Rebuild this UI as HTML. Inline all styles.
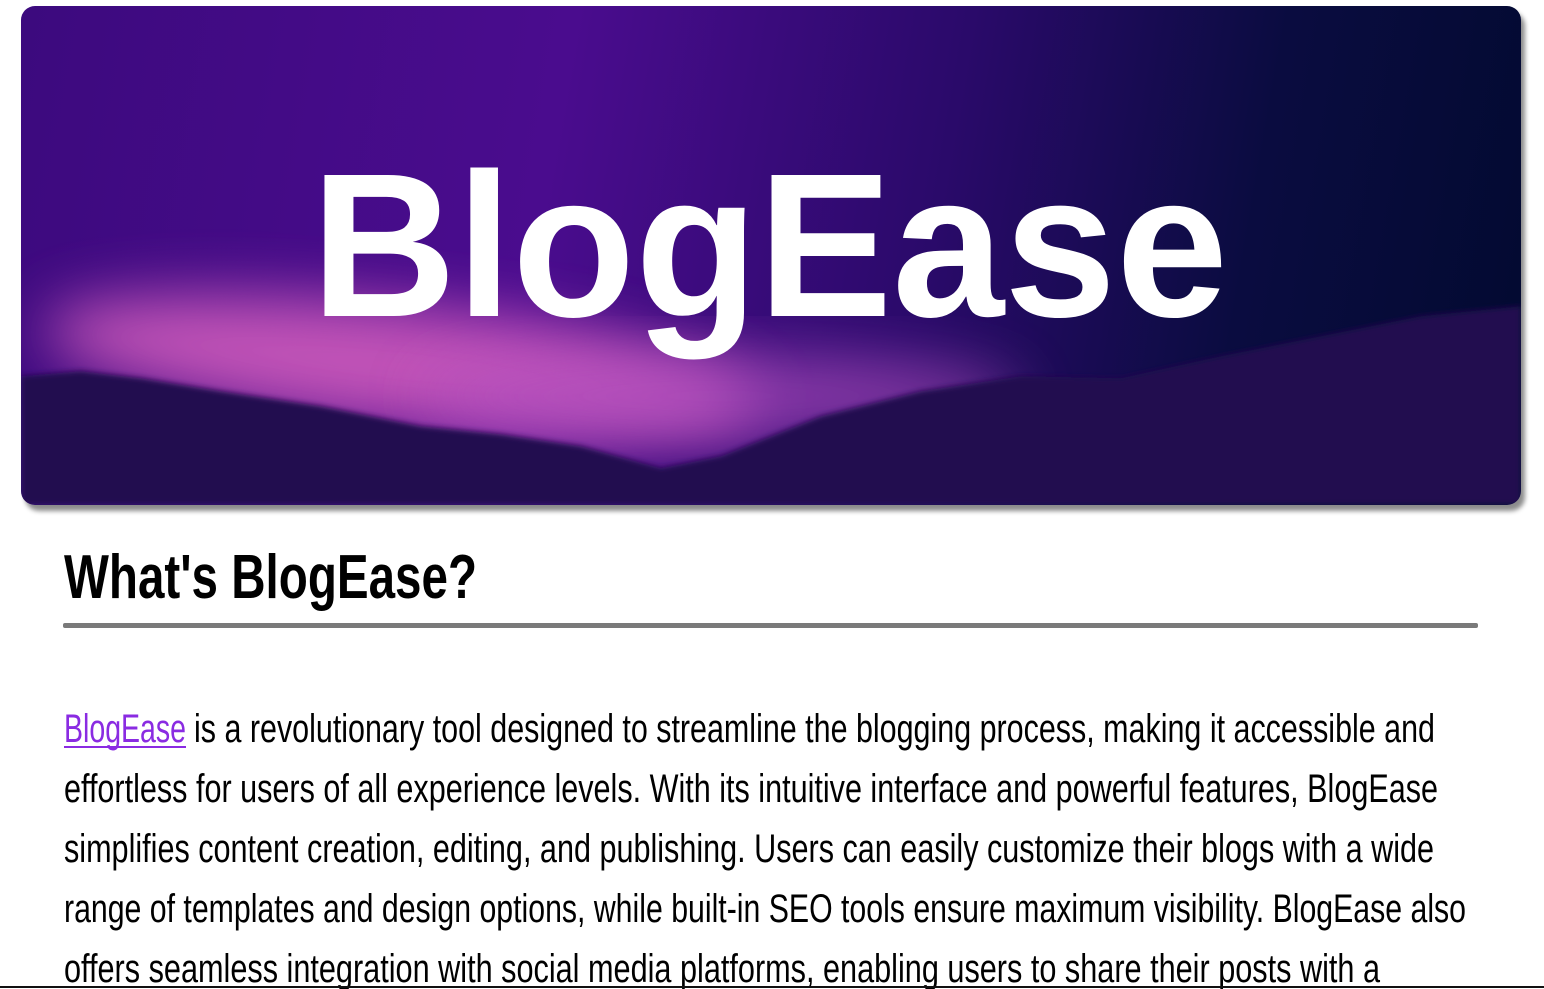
<!DOCTYPE html>
<html><head><meta charset="utf-8"><style>
html,body{margin:0;padding:0;background:#fff;width:1544px;height:989px;overflow:hidden;position:relative}
.banner{position:absolute;left:21px;top:6px;width:1500px;height:499px;border-radius:14px;overflow:hidden;box-shadow:4px 6px 5px rgba(0,0,0,.45);
background:linear-gradient(100deg,#3c0a7e 0%,#4a0c8e 35%,#2a0a6a 60%,#0a0c40 80%,#020a30 100%)}
.bl{position:absolute;left:0;top:0}
.bottomline{position:absolute;left:0;top:986px;width:1544px;height:2px;background:#111}
</style></head><body>
<div class="banner">
<svg class="bl" width="1500" height="499" viewBox="0 0 1500 499">
<defs>
<filter id="b" x="-30%" y="-50%" width="160%" height="200%"><feGaussianBlur stdDeviation="30"/></filter>
<filter id="b2"><feGaussianBlur stdDeviation="3"/></filter>
</defs>
<ellipse cx="380" cy="360" rx="360" ry="60" fill="#d860c0" opacity=".85" filter="url(#b)" transform="rotate(6 380 360)"/>
<ellipse cx="700" cy="390" rx="300" ry="40" fill="#b050c0" opacity=".7" filter="url(#b)"/>
<path d="M0 370 L60 365 L120 372 L200 385 L300 400 L400 420 L480 428 L560 440 L640 462 L700 450 L800 410 L900 385 L1000 370 L1100 372 L1200 350 L1300 330 L1400 310 L1500 300 L1500 499 L0 499 Z" fill="#22074f" filter="url(#b2)"/>
<text x="290" y="310" font-family="Liberation Sans, sans-serif" font-weight="bold" font-size="205" fill="#fff" textLength="917" lengthAdjust="spacingAndGlyphs">BlogEase</text>
</svg>
</div>
<svg style="position:absolute;left:0;top:520px" width="1544" height="470">
<text x="64" y="78" font-family="Liberation Sans, sans-serif" font-weight="bold" font-size="62" fill="#000" textLength="413" lengthAdjust="spacingAndGlyphs">What's BlogEase?</text>
<rect x="63" y="103" width="1415" height="5" rx="2" fill="#7a7a7a"/>
<g font-family="Liberation Sans, sans-serif" font-size="40" fill="#000">
<text x="64" y="222" textLength="122" lengthAdjust="spacingAndGlyphs" fill="#8a2be2">BlogEase</text>
<rect x="64" y="226" width="122" height="2" fill="#8a2be2"/>
<text x="194" y="222" textLength="1241" lengthAdjust="spacingAndGlyphs">is a revolutionary tool designed to streamline the blogging process, making it accessible and</text>
<text x="64" y="282" textLength="1374" lengthAdjust="spacingAndGlyphs">effortless for users of all experience levels. With its intuitive interface and powerful features, BlogEase</text>
<text x="64" y="342" textLength="1370" lengthAdjust="spacingAndGlyphs">simplifies content creation, editing, and publishing. Users can easily customize their blogs with a wide</text>
<text x="64" y="402" textLength="1402" lengthAdjust="spacingAndGlyphs">range of templates and design options, while built-in SEO tools ensure maximum visibility. BlogEase also</text>
<text x="64" y="462" textLength="1316" lengthAdjust="spacingAndGlyphs">offers seamless integration with social media platforms, enabling users to share their posts with a</text>
</g>
</svg>
<div class="bottomline"></div>
</body></html>
